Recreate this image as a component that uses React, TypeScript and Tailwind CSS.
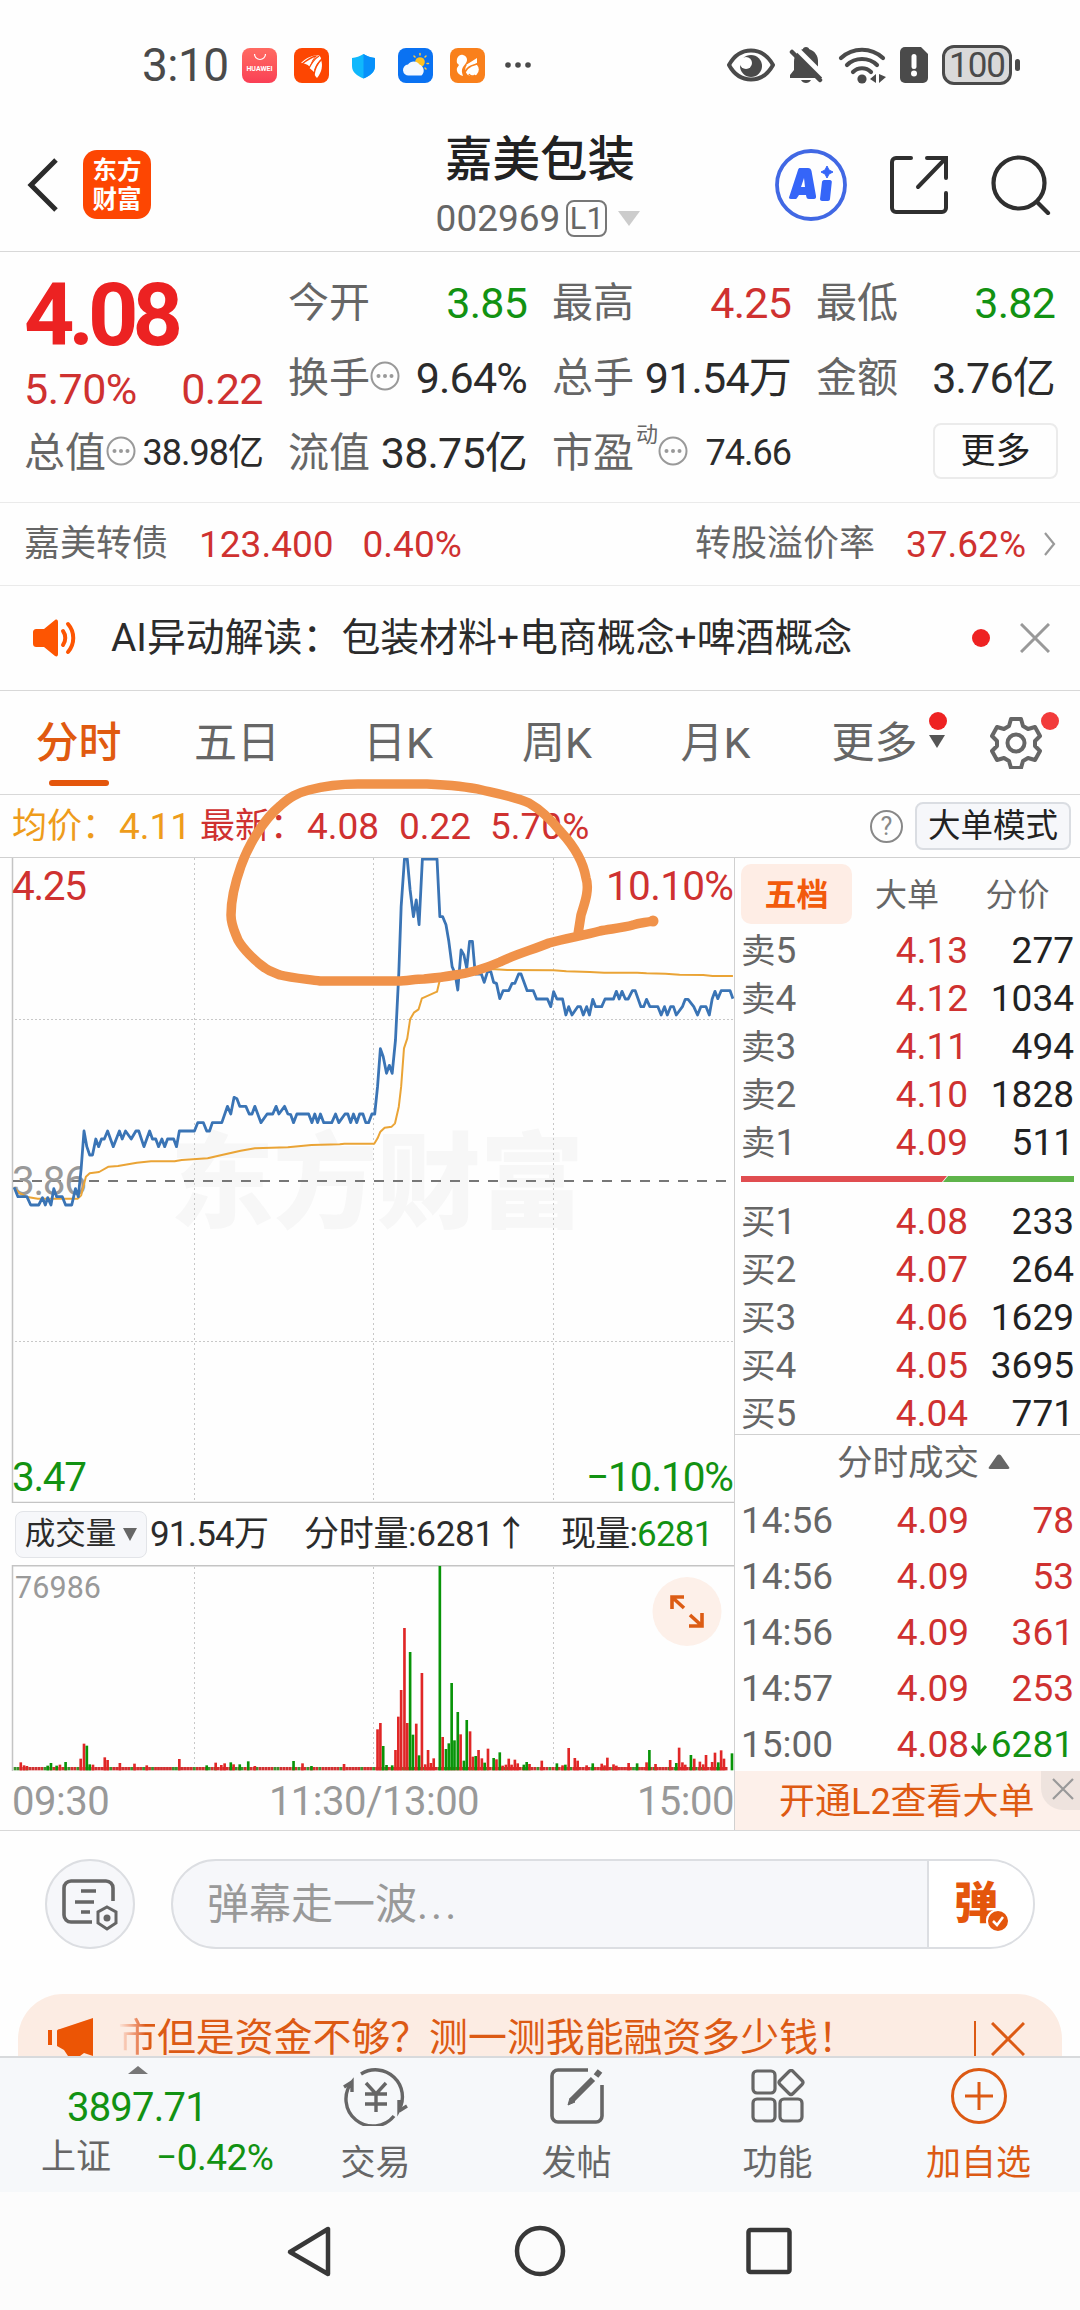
import React from 'react';

type Tone = 'up' | 'down' | 'flat';

const toneClass: Record<Tone, string> = {
  up: 'text-[#cf3130]',
  down: 'text-[#129212]',
  flat: 'text-[#2b2b2b]',
};

// Plot coordinates of the minute chart: 1568 x 1200 units
const PRICE_POINTS =
  '30,1042 38,1070 57,1070 65,1095 82,1095 90,1073 96,1095 101,1073 108,1095 114,1046 120,1070 132,1070 139,1095 152,1095 160,1046 166,1070 172,985 178,873 184,920 190,945 196,945 203,897 209,920 215,897 221,897 228,873 240,920 253,873 259,897 266,873 278,897 288,873 294,873 305,920 317,873 323,897 330,897 336,920 343,897 349,920 355,897 368,897 374,920 380,873 412,873 419,848 431,848 438,873 444,873 450,848 470,848 482,799 489,822 496,772 502,776 508,799 521,799 528,822 534,822 540,799 553,848 566,822 578,822 585,799 591,822 603,799 610,822 616,824 622,848 629,822 654,822 661,848 667,822 673,848 679,822 686,848 703,848 711,822 718,848 731,822 737,822 743,848 749,822 756,848 762,822 769,822 775,848 781,848 788,822 794,822 800,740 806,626 812,650 819,700 825,676 831,700 838,600 845,400 850,200 857,57 863,57 869,150 876,230 882,180 888,254 895,57 926,57 932,230 938,230 945,254 951,304 958,380 964,400 970,450 977,330 983,345 989,385 995,304 1001,304 1007,402 1020,402 1026,427 1033,395 1040,395 1046,427 1052,430 1059,476 1066,452 1078,452 1085,430 1091,430 1099,402 1104,402 1117,452 1130,452 1137,477 1160,477 1167,500 1173,455 1180,477 1192,477 1199,525 1205,500 1212,525 1224,500 1230,500 1236,525 1243,500 1249,525 1256,478 1262,500 1275,500 1282,477 1300,477 1306,454 1312,477 1318,454 1325,477 1331,477 1340,452 1346,452 1358,500 1364,500 1370,478 1377,500 1394,500 1401,525 1408,500 1414,525 1421,500 1427,500 1433,525 1446,500 1452,478 1458,478 1470,500 1478,525 1485,500 1496,500 1503,525 1509,477 1515,454 1521,476 1528,452 1547,452 1553,476';

const AVG_POINTS =
  '30,1042 40,1058 55,1070 80,1076 165,1076 172,1066 182,1010 190,1000 210,996 230,980 250,978 290,968 320,964 370,964 385,960 440,955 470,945 510,932 540,925 610,922 660,915 720,913 730,911 793,911 800,895 806,875 815,863 830,860 837,850 845,800 850,740 856,625 863,595 869,538 877,518 887,508 894,475 926,455 931,425 970,402 1000,393 1040,387 1075,390 1173,391 1200,394 1250,396 1280,398 1350,398 1370,400 1410,401 1440,404 1490,405 1510,408 1553,408';

// x:top pairs of the volume bars that stand out, baseline at 810
const RED_BARS =
  '44:787 51:796 57:798 127:794 171:776 178:731 197:794 222:772 228:780 254:789 285:791 311:796 380:777 457:788 469:795 476:790 495:793 540:798 641:790 729:792 800:688 806:669 838:750 844:650 850:570 857:384 863:669 882:671 894:519 901:793 907:750 913:789 919:775 938:711 976:703 996:694 1002:770 1014:750 1021:775 1034:746 1052:778 1065:797 1072:794 1078:776 1084:794 1091:779 1097:790 1122:792 1148:782 1192:796 1205:744 1218:774 1224:782 1243:796 1275:791 1281:796 1287:773 1300:793 1306:797 1332:789 1370:787 1389:792 1420:780 1439:743 1446:787 1452:794 1471:776 1483:785 1490:793 1496:765 1509:786 1515:758 1528:751 1534:776';
const GREEN_BARS =
  '101:797 108:789 120:797 139:786 184:737 190:793 438:796 489:787 508:793 526:784 622:783 660:798 812:738 819:795 831:796 869:456 875:704 888:766 932:198 945:747 951:730 957:549 963:721 970:636 983:782 989:660 1008:768 1027:788 1046:774 1059:757 1110:794 1116:786 1180:790 1198:794 1256:790 1350:790 1376:750 1433:789 1464:765 1522:787 1551:760';

const parseBars = (src: string, color: string) =>
  src.split(' ').map((pair) => {
    const [x, top] = pair.split(':').map(Number);
    return { x, top, color };
  });

const bars = [...parseBars(RED_BARS, '#e02626'), ...parseBars(GREEN_BARS, '#089408')];

const baseBars = Array.from({ length: 239 }, (_, i) => ({
  x: 32 + i * 6.33,
  color: i < 2 || i % 7 === 4 || i % 11 === 10 ? '#3d8f2c' : '#d03030',
}));

const sells = [
  ['卖5', '4.13', '277'],
  ['卖4', '4.12', '1034'],
  ['卖3', '4.11', '494'],
  ['卖2', '4.10', '1828'],
  ['卖1', '4.09', '511'],
];

const buys = [
  ['买1', '4.08', '233'],
  ['买2', '4.07', '264'],
  ['买3', '4.06', '1629'],
  ['买4', '4.05', '3695'],
  ['买5', '4.04', '771'],
];

const deals = [
  { time: '14:56', price: '4.09', volume: '78' },
  { time: '14:56', price: '4.09', volume: '53' },
  { time: '14:56', price: '4.09', volume: '361' },
  { time: '14:57', price: '4.09', volume: '253' },
  { time: '15:00', price: '4.08', volume: '6281', down: true },
];

const StatusBar = () => (
  <div className="flex h-[130px] items-center pl-[142px] pr-[60px]">
    <span className="w-[100px] text-[46px] leading-none tracking-[-0.5px] text-[#4a4a4a]">3:10</span>
    <div className="flex items-center gap-[17px]">
      <div className="flex h-[35px] w-[35px] flex-col items-center overflow-hidden rounded-[8px] bg-linear-to-b from-[#ff6a62] to-[#fa3f55]">
        <svg width="14" height="17" viewBox="0 0 14 17" fill="none" stroke="#fff" strokeWidth="1.2" className="shrink-0">
          <path d="M1.500 6a5.500 5.500 0 0 0 11 0" />
        </svg>
        <span className="text-[7px] font-bold leading-[8px] text-white">HUAWEI</span>
      </div>
      <svg width="35" height="35" viewBox="0 0 35 35">
        <rect width="35" height="35" rx="8" fill="#fd4602" />
        <g fill="#fff">
          <path d="M7 15C12 10 17 8 23 7C19 10 17 14 16 19C13 16 10 15 7 15Z" />
          <path d="M24 7C26 8 27 9 27 11C23 15 20 20 20 24C18 22 17 21 15 20C18 15 20 10 24 7Z" />
          <path d="M27 12C29 17 28 24 23 30C21 28 20 26 20 24C22 19 24 15 27 12Z" />
        </g>
        <path d="M8 16C13 12 18 9 22 8M14 22C17 16 20 11 25 8M20 27C21 20 24 15 27 12" stroke="#fd4602" strokeWidth="1.300" fill="none" />
      </svg>
      <svg width="35" height="35" viewBox="0 0 35 35">
        <path d="M17.500 6C21 8.500 25 9.500 29 10v8c0 6-5 10-11.500 12.500C11 28 6 24 6 18v-8c4-.5 8-1.500 11.500-4Z" fill="#10b8fc" />
        <path d="M17.500 6C21 8.500 25 9.500 29 10v8c0 6-5 10-11.500 12.500Z" fill="#0790fa" />
      </svg>
      <svg width="35" height="35" viewBox="0 0 35 35">
        <rect width="35" height="35" rx="8" fill="#0a72f2" />
        <g stroke="#ffc93c" strokeWidth="1.500" strokeLinecap="round">
          <path d="M22 5.500v1.500M28 8l-1 1M30.500 15.500H29M28 21l-1-1M16 8l1 1" />
        </g>
        <circle cx="22" cy="14" r="4.800" fill="#ffc020" />
        <path d="M11 27.500a5.500 5.500 0 0 1-1-11 7 7 0 0 1 11.500 0 6.500 6.500 0 0 1 2 11Z" fill="#f3f8ff" />
      </svg>
      <svg width="35" height="35" viewBox="0 0 35 35">
        <rect width="35" height="35" rx="8" fill="#f9801c" />
        <path d="M7 15C6 10 9 6 13 7c4 1 5 5 3 8l-3 4c-2 3-1 6 0 9-4-1-7-4-6-8l2-3Z" fill="#fff" />
        <path d="m16 17 11-7v5l-7 4" fill="#fff" />
        <circle cx="22" cy="21.500" r="6.800" fill="#fff" />
        <path d="M14 29c0-7 4-11 13-13M19 26c1 2 4 3 6 1" stroke="#f9801c" strokeWidth="1.600" fill="none" />
      </svg>
      <svg width="30" height="8" viewBox="0 0 30 8" fill="#4a4a4a" className="ml-[2px]">
        <circle cx="4" cy="4" r="2.800" />
        <circle cx="14" cy="4" r="2.800" />
        <circle cx="24" cy="4" r="2.800" />
      </svg>
    </div>
    <div className="ml-auto flex items-center gap-[14px]">
      <svg width="48" height="36" viewBox="0 0 48 36">
        <path d="M2 18C8 7 15 3.500 24 3.500S40 7 46 18C40 29 33 32.500 24 32.500S8 29 2 18Z" fill="none" stroke="#4a4a4a" strokeWidth="4" strokeLinejoin="round" />
        <circle cx="24" cy="19" r="11" fill="#4a4a4a" />
        <circle cx="19" cy="16" r="6" fill="#fff" />
        <path d="M16 11c2 5 1 7-2 9l-3-8Z" fill="#fefefe" />
      </svg>
      <svg width="35" height="38" viewBox="0 0 35 38">
        <path d="M17 1c2 0 3 1 3 2 6 2 9 7 9 12v8l4 7v2H1v-3l4-5v-8C5 9 9 5 14 3c0-1 1-2 3-2Z" fill="#4a4a4a" />
        <path d="M12 34h10c-1 2-3 3-5 3s-4-1-5-3Z" fill="#4a4a4a" />
        <path d="M6 1 36 31" stroke="#fefefe" strokeWidth="5" />
        <path d="M3 6 31 34" stroke="#4a4a4a" strokeWidth="4.500" strokeLinecap="round" />
      </svg>
      <svg width="48" height="38" viewBox="0 0 48 38" fill="none" stroke="#4a4a4a" strokeWidth="4.200" strokeLinecap="round">
        <path d="M3 12C15 1 33 1 45 12" />
        <path d="M9 19c8-8 22-8 30 0" />
        <path d="M15 26c5-5 13-5 18 0" />
        <circle cx="24" cy="33" r="4.600" fill="#4a4a4a" stroke="none" />
        <path d="M38 28v9l-6-4ZM41 28v9l7-6Z" fill="#4a4a4a" stroke="none" />
      </svg>
      <svg width="28" height="36" viewBox="0 0 28 36">
        <path d="M5 0h16l7 7v24a5 5 0 0 1-5 5H5a5 5 0 0 1-5-5V5a5 5 0 0 1 5-5Z" fill="#4a4a4a" />
        <path d="M14 9.500v10" stroke="#fff" strokeWidth="5" strokeLinecap="round" />
        <circle cx="14" cy="26.500" r="3" fill="#fff" />
      </svg>
      <div className="flex items-center gap-[3px]">
        <div className="flex h-[40px] w-[70px] items-center justify-center rounded-[12px] border-[3px] border-[#4a4a4a] bg-[#d9d9d9] text-[35px] leading-none tracking-[-1px] text-[#4a4a4a]">
          100
        </div>
        <div className="h-[12px] w-[5px] rounded-full bg-[#4a4a4a]" />
      </div>
    </div>
  </div>
);

const Header = () => (
  <div className="grid h-[122px] grid-cols-[1fr_auto_1fr] items-start border-b border-[#d8d8d8]">
    <div className="flex h-[109px] items-center gap-[25px] pl-[27px]">
      <svg width="31" height="54" viewBox="0 0 31 54" fill="none" stroke="#2b2b2b" strokeWidth="5">
        <path d="M29 2 4 27l25 25" />
      </svg>
      <div className="flex h-[69px] w-[68px] flex-col items-center justify-center rounded-[14px] bg-[#fd4602] text-[24.500px] font-bold leading-[29px] text-white">
        <span>东方</span>
        <span>财富</span>
      </div>
    </div>
    <div className="flex flex-col items-center">
      <div className="h-[60px] text-[47.500px] font-medium leading-[60px] text-[#222]">嘉美包装</div>
      <div className="-ml-[4px] flex h-[56px] items-center text-[#666]">
        <span className="text-[37px] leading-none">002969</span>
        <span className="ml-[6px] flex h-[37px] w-[41px] items-center justify-center rounded-[8px] border-2 border-[#777] text-[31px] leading-none">
          L1
        </span>
        <svg width="22" height="15" viewBox="0 0 22 15" className="ml-[11px]">
          <path d="M0 0h22L11 15Z" fill="#ccc" />
        </svg>
      </div>
    </div>
    <div className="flex h-[109px] items-center justify-end gap-[43px] pr-[29px]">
      <svg width="72" height="72" viewBox="0 0 72 72" fill="none">
        <circle cx="36" cy="36" r="34" stroke="#4168e4" strokeWidth="3.800" />
        <path
          d="M25 19h8c2 0 3 1 3.500 3L41 47c.3 2-.5 3-2 3h-5c-2 0-2.500-1-3-4h-7l-2 3c-.6 1-1 1-2 1h-4c-2 0-2.500-1-1.500-3L23 21c.5-1.500 1-2 2-2Zm4 10-3 9h4Z"
          fill="#3565f8"
          fillRule="evenodd"
        />
        <path d="M49 31h6c1 0 2 1 1.800 2L55 50c0 1-1 2-2 2h-6c-1 0-2-1-2-2l2-17c0-1 1-2 2-2Z" fill="#3565f8" />
        <path d="m52 17 2 4 4 2-4 2-2 4-2-4-4-2 4-2Z" fill="#3565f8" stroke="#3565f8" />
      </svg>
      <svg width="58" height="58" viewBox="0 0 58 58" fill="none" stroke="#2f2f2f" strokeWidth="4" strokeLinecap="round">
        <path d="M21 2H6a4 4 0 0 0-4 4v46a4 4 0 0 0 4 4h46a4 4 0 0 0 4-4V37" />
        <path d="M37 2h19v20M55 3 28 31" />
      </svg>
      <svg width="60" height="60" viewBox="0 0 60 60" fill="none" stroke="#2f2f2f" strokeWidth="4.200" strokeLinecap="round">
        <circle cx="28" cy="28" r="25.500" />
        <path d="m46 47 11 11" />
      </svg>
    </div>
  </div>
);

const MoreDots = () => (
  <svg width="30" height="30" viewBox="0 0 30 30" className="mt-[-4px] shrink-0">
    <circle cx="15" cy="15" r="13.500" fill="none" stroke="#999" strokeWidth="2" />
    <g fill="#999">
      <circle cx="8.500" cy="15" r="2" />
      <circle cx="15" cy="15" r="2" />
      <circle cx="21.500" cy="15" r="2" />
    </g>
  </svg>
);

interface StatProps {
  label: string;
  value: string;
  tone?: Tone;
  dots?: boolean;
  small?: boolean;
  sup?: string;
}

const Stat: React.FC<StatProps> = ({ label, value, tone = 'flat', dots, small, sup }) => (
  <div className="flex h-[75px] items-center justify-between whitespace-nowrap pt-px leading-none">
    <div className="-ml-[2px] flex items-center text-[41px] text-[#666]">
      <span>{label}</span>
      {sup && <span className="-mt-[36px] ml-[2px] text-[22px]">{sup}</span>}
      {dots && <MoreDots />}
    </div>
    <span className={`${toneClass[tone]} ${small ? 'text-[36px] tracking-[-1px]' : 'text-[43px] tracking-[-0.8px]'}`}>{value}</span>
  </div>
);

const QuotePanel = () => (
  <div className="grid h-[251px] grid-cols-4 gap-[27px] border-b border-[#eaeaea] pl-[26px] pr-[25px] pt-[13px]">
    <div>
      <div className="-ml-[2px] flex h-[98px] items-center pt-[2px] text-[88px] font-bold leading-none tracking-[-6px] text-[#ec2222]">
        4.08
      </div>
      <div className="-ml-[2px] flex h-[52px] items-center justify-between pt-px text-[43px] leading-none tracking-[-0.5px] text-[#cf3130]">
        <span>5.70%</span>
        <span>0.22</span>
      </div>
      <Stat label="总值" value="38.98亿" dots small />
    </div>
    <div>
      <Stat label="今开" value="3.85" tone="down" />
      <Stat label="换手" value="9.64%" dots />
      <Stat label="流值" value="38.75亿" />
    </div>
    <div>
      <Stat label="最高" value="4.25" tone="up" />
      <Stat label="总手" value="91.54万" />
      <Stat label="市盈" value="74.66" sup="动" dots small />
    </div>
    <div>
      <Stat label="最低" value="3.82" tone="down" />
      <Stat label="金额" value="3.76亿" />
      <div className="-mr-[3px] flex h-[75px] items-center justify-end">
        <div className="-mt-[3px] flex h-[56px] w-[125px] items-center justify-center rounded-[8px] border-2 border-[#ebebeb] text-[35px] leading-none text-[#222]">
          更多
        </div>
      </div>
    </div>
  </div>
);

const BondRow = () => (
  <div className="flex h-[83px] items-center border-b border-[#eaeaea] pl-[24px] pr-[24px] leading-none">
    <span className="text-[36px] text-[#666]">嘉美转债</span>
    <span className="ml-[31px] text-[37px] text-[#cf3130]">123.400</span>
    <span className="ml-[29px] text-[37px] text-[#cf3130]">0.40%</span>
    <span className="ml-auto text-[36px] text-[#666]">转股溢价率</span>
    <span className="ml-[31px] text-[37px] text-[#cf3130]">37.62%</span>
    <svg width="12" height="24" viewBox="0 0 12 24" fill="none" stroke="#999" strokeWidth="2.200" className="ml-[18px]">
      <path d="m1 1 9 11-9 11" />
    </svg>
  </div>
);

const NoticeRow = () => (
  <div className="flex h-[105px] items-center border-b border-[#d8d8d8] pl-[33px] pr-[30px]">
    <svg width="46" height="38" viewBox="0 0 46 38">
      <path d="M4 10h7L22 1c2-1 3 0 3 2v32c0 2-1 3-3 2l-11-9H4c-3 0-4-1-4-4V14c0-3 1-4 4-4Z" fill="#fd5502" />
      <path d="M30 12c3 4 3 10 0 14M35 5c7 8 7 20 0 28" stroke="#fd5502" strokeWidth="4" fill="none" strokeLinecap="round" />
    </svg>
    <span className="ml-[32px] text-[38.900px] leading-none text-[#2b2b2b]">AI异动解读：包装材料+电商概念+啤酒概念</span>
    <span className="ml-auto h-[18px] w-[18px] rounded-full bg-[#ee2222]" />
    <svg width="30" height="30" viewBox="0 0 30 30" stroke="#999" strokeWidth="3" className="ml-[30px]">
      <path d="m1 1 28 28M29 1 1 29" />
    </svg>
  </div>
);

const PeriodTabs = () => (
  <div className="flex h-[104px] items-center border-b border-[#d8d8d8] text-[43px] leading-none text-[#666]">
    <div className="relative flex h-full w-[157px] items-center justify-center pt-[2px] font-medium text-[#e05a10]">
      分时
      <div className="absolute bottom-[8px] left-[49px] h-[6px] w-[60px] rounded-full bg-[#e4560c]" />
    </div>
    <div className="w-[160px] pt-[2px] text-center">五日</div>
    <div className="w-[162px] pt-[2px] text-center">日K</div>
    <div className="w-[156px] pt-[2px] text-center">周K</div>
    <div className="w-[161px] pt-[2px] text-center">月K</div>
    <div className="relative w-[157px] pt-[2px] text-center">
      更多
      <svg width="16" height="13" viewBox="0 0 16 13" className="absolute left-[133px] top-[15px]">
        <path d="M0 0h16L8 13Z" fill="#555" />
      </svg>
      <span className="absolute left-[133px] top-[-8px] h-[18px] w-[18px] rounded-full bg-[#ee2222]" />
    </div>
    <div className="relative flex flex-1 justify-center pr-[2px]">
      <svg width="52" height="52" viewBox="0 0 52 52" fill="none" stroke="#666" strokeWidth="4">
        <path
          d="M21 2h10l2 7 5 3 7-2 5 9-5 5v5l5 5-5 9-7-2-5 3-2 7H21l-2-7-5-3-7 2-5-9 5-5v-5l-5-5 5-9 7 2 5-3Z"
          strokeLinejoin="round"
        />
        <circle cx="26" cy="26" r="8.500" />
      </svg>
      <span className="absolute left-[88px] top-[-5px] h-[18px] w-[18px] rounded-full bg-[#f23b3b]" />
    </div>
  </div>
);

const PriceInfo = () => (
  <div className="flex h-[63px] items-center whitespace-nowrap border-b border-[#d0d0d0] pl-[12px] pr-[9px] text-[35px] leading-none">
    <span className="w-[107px] text-[#ee9c1b]">均价：</span>
    <span className="w-[81px] text-[37px] text-[#ee9c1b]">4.11</span>
    <span className="w-[107px] text-[#cf3130]">最新：</span>
    <span className="w-[92px] text-[37px] text-[#cf3130]">4.08</span>
    <span className="w-[91px] text-[37px] text-[#cf3130]">0.22</span>
    <span className="text-[37px] text-[#cf3130]">5.70%</span>
    <div className="ml-auto flex h-[33px] w-[33px] items-center justify-center rounded-full border-2 border-[#888] text-[25px] text-[#888]">?</div>
    <div className="ml-[12px] flex h-[48px] w-[156px] items-center justify-center rounded-[8px] border-2 border-[#dadde2] bg-[#f6f7fa] text-[32.500px] text-[#222]">
      大单模式
    </div>
  </div>
);

const VerticalGrid = ({ y1, y2 }: { y1: number; y2: number }) => (
  <g stroke="#c8c8c8" strokeWidth="1" strokeDasharray="2 3">
    <path d={`M194.500 ${y1}V${y2}`} />
    <path d={`M373.500 ${y1}V${y2}`} />
    <path d={`M553.500 ${y1}V${y2}`} />
  </g>
);

const PriceChart = () => (
  <svg width="734" height="645" viewBox="0 858 734 645" className="block">
    <text x="170" y="1220" textLength="414" fontSize="104" fontWeight="900" fill="#f7f7f7">
      东方财富
    </text>
    <VerticalGrid y1={858} y2={1502} />
    <path d="M15 1019.500H733M15 1341.500H733" stroke="#c8c8c8" strokeDasharray="2 2" />
    <path d="M12.500 858V1502.500H734" fill="none" stroke="#c4c4c4" strokeWidth="1.500" />
    <path d="M13 1181H733" stroke="#777" strokeWidth="1.800" strokeDasharray="10 9" />
    <g fontSize="40.500">
      <text x="12" y="900" textLength="75" fill="#cf3130">4.25</text>
      <text x="606" y="900" textLength="128" fill="#cf3130">10.10%</text>
      <text x="12" y="1195" textLength="75" fill="#999">3.86</text>
      <text x="12" y="1491" textLength="75" fill="#129212">3.47</text>
      <text x="586" y="1491" textLength="148" fill="#129212">−10.10%</text>
    </g>
    <g transform="translate(0 840) scale(0.47194 0.33333)" fill="none" strokeLinejoin="round">
      <polyline points={AVG_POINTS} stroke="#eaa436" strokeWidth="2" vectorEffect="non-scaling-stroke" />
      <polyline points={PRICE_POINTS} stroke="#3a74b5" strokeWidth="2.800" vectorEffect="non-scaling-stroke" />
    </g>
  </svg>
);

const VolumeChart = () => (
  <svg width="734" height="206" viewBox="0 1565 734 206" className="block">
    <VerticalGrid y1={1567} y2={1770} />
    <path d="M12.500 1771V1565.800H734" fill="none" stroke="#c4c4c4" strokeWidth="1.500" />
    <text x="15" y="1598" textLength="86" fontSize="30.500" fill="#999">76986</text>
    <g transform="translate(0 1500) scale(0.47194 0.33333)">
      {baseBars.map((bar, i) => (
        <rect key={i} x={bar.x - 3} y={801} width={6} height={10} fill={bar.color} />
      ))}
      {bars.map((bar, i) => (
        <rect key={i} x={bar.x - 2.8} y={bar.top} width={5.6} height={811 - bar.top} fill={bar.color} />
      ))}
    </g>
    <circle cx="687" cy="1611.500" r="34.500" fill="#fdf0e9" />
    <g fill="none" stroke="#dc5c14" strokeWidth="3.600">
      <path d="M672 1609V1597H684M673 1598 684 1608" />
      <path d="M702 1613V1626H689M701 1625 690 1615" />
    </g>
  </svg>
);

const ChartColumn = () => (
  <div className="w-[735px] border-r border-[#d0d0d0]">
    <PriceChart />
    <div className="flex h-[62px] items-center whitespace-nowrap pl-[15px] text-[35px] leading-none text-[#2b2b2b]">
      <div className="flex h-[47px] w-[132px] items-center justify-center gap-[7px] rounded-[8px] border border-[#e2e4e8] bg-[#f6f7fa] text-[30.500px]">
        成交量
        <svg width="14" height="13" viewBox="0 0 14 13">
          <path d="M0 0h14L7 13Z" fill="#666" />
        </svg>
      </div>
      <span className="ml-[3px] w-[154px] tracking-[-0.8px]">91.54万</span>
      <span className="w-[257px] tracking-[-0.3px]">分时量:6281↑</span>
      <span className="tracking-[-0.8px]">
        现量:<span className="text-[#129212]">6281</span>
      </span>
    </div>
    <VolumeChart />
    <div className="flex h-[59px] items-center justify-between pl-[12px] pt-[2px] text-[40px] leading-none tracking-[-0.5px] text-[#999]">
      <span>09:30</span>
      <span className="ml-[2px]">11:30/13:00</span>
      <span>15:00</span>
    </div>
  </div>
);

const LevelRow = ({ row }: { row: string[] }) => (
  <div className="flex h-[48px] items-center pl-[6px] pr-[6px] pt-[2px] text-[37px] leading-none">
    <span className="w-[90px] text-[#666]">
      <span className="text-[34.500px]">{row[0][0]}</span>
      {row[0][1]}
    </span>
    <span className="w-[137px] text-right text-[#cf3130]">{row[1]}</span>
    <span className="flex-1 text-right text-[#222]">{row[2]}</span>
  </div>
);

const OrderColumn = () => (
  <div className="w-[345px]">
    <div className="flex h-[67px] items-start pl-[6px] pt-[6px] text-[32px] leading-none text-[#666]">
      <div className="flex h-[60px] w-[111px] items-center justify-center rounded-[10px] bg-[#feede5] pt-[2px] font-bold text-[#f25a0c]">五档</div>
      <div className="flex h-[60px] w-[110px] items-center justify-center pt-[2px]">大单</div>
      <div className="flex h-[60px] w-[111px] items-center justify-center pt-[2px]">分价</div>
    </div>
    {sells.map((row) => (
      <LevelRow key={row[0]} row={row} />
    ))}
    <div className="flex h-[31px] items-start pl-[6px] pt-[11px]">
      <svg width="333" height="6" viewBox="0 0 333 6">
        <path d="M0 0H206L201 6H0Z" fill="#e04d50" />
        <path d="M207 0H333V6H202Z" fill="#5fb44b" />
      </svg>
    </div>
    <div className="h-[238px]">
      {buys.map((row) => (
        <LevelRow key={row[0]} row={row} />
      ))}
    </div>
    <div className="flex h-[57px] items-center justify-center gap-[9px] border-t border-[#d0d0d0] pl-[32px] pt-[2px] text-[35.500px] leading-none text-[#666]">
      分时成交
      <svg width="22" height="16" viewBox="0 0 22 16" className="-mt-[4px]">
        <path d="M9 1.500c1-1.500 3-1.500 4 0L21 13c1 1 0 2-1 2H2c-1 0-2-1-1-2Z" fill="#666" />
      </svg>
    </div>
    {deals.map((deal, i) => (
      <div key={i} className="flex h-[56px] items-center pl-[6px] pr-[6px] pt-[2px] text-[37px] leading-none">
        <span className="w-[110px] text-[#666]">{deal.time}</span>
        <span className="w-[118px] text-right text-[#cf3130]">{deal.price}</span>
        {deal.down ? (
          <span className="flex flex-1 items-center justify-end text-[#129212]">
            <svg width="16" height="24" viewBox="0 0 16 24" fill="none" stroke="#129212" strokeWidth="3" className="mr-[4px]">
              <path d="M8 1v20M1 14l7 8 7-8" />
            </svg>
            {deal.volume}
          </span>
        ) : (
          <span className="flex-1 text-right text-[#cf3130]">{deal.volume}</span>
        )}
      </div>
    ))}
    <div className="relative flex h-[59px] items-center bg-[#fdf0ea] pl-[44px] pt-[2px] text-[36px] leading-none text-[#de5a12]">
      开通L2查看大单
      <div className="absolute right-0 top-0 flex h-[39px] w-[39px] items-center justify-center rounded-bl-[22px] bg-[#eee3de]">
        <svg width="22" height="22" viewBox="0 0 22 22" stroke="#999" strokeWidth="2.200" className="ml-[5px] -mt-[4px]">
          <path d="m1 1 20 20M21 1 1 21" />
        </svg>
      </div>
    </div>
  </div>
);

const CommentBar = () => (
  <div className="flex items-center pl-[45px] pr-[45px] pt-[28px]">
    <div className="flex h-[90px] w-[90px] items-center justify-center rounded-full border-2 border-[#dcdee2] bg-[#f6f7fa]">
      <svg width="56" height="52" viewBox="0 0 56 52" fill="none" stroke="#666" strokeWidth="3.600" className="mt-[2px]">
        <path d="M51 22V9a7 7 0 0 0-7-7H9a7 7 0 0 0-7 7v27a7 7 0 0 0 7 7h21" />
        <path d="M19 12h15M13 23h19M19 33h9" />
        <path d="m45 28 9 5v11l-9 6-9-6V33Z" strokeWidth="3" />
        <circle cx="45" cy="39" r="3.500" fill="#666" stroke="none" />
      </svg>
    </div>
    <div className="ml-[36px] flex h-[90px] flex-1 items-center overflow-hidden rounded-full border-2 border-[#dcdee2] bg-[#f6f7fa]">
      <span className="flex-1 pl-[34px] pt-[2px] text-[42px] leading-none text-[#999]">
        弹幕走一波<span className="tracking-[3px]">...</span>
      </span>
      <div className="relative flex h-full w-[106px] items-center border-l-2 border-[#dcdee2] bg-white pl-[25px] text-[44px] font-black leading-none text-[#e4560c]">
        弹
        <svg width="24" height="24" viewBox="0 0 24 24" className="absolute left-[57px] top-[48px]">
          <circle cx="12" cy="12" r="11" fill="#e4560c" stroke="#fff" strokeWidth="2" />
          <path d="m7 12 4 4 6-8" stroke="#fff" strokeWidth="2.500" fill="none" />
        </svg>
      </div>
    </div>
  </div>
);

const PromoBanner = () => (
  <div className="mx-[18px] mt-[45px] flex h-[62px] items-start rounded-t-[45px] bg-[#fcece3] pl-[30px] pr-[37px] pt-[23px] leading-none text-[#dc5a14]">
    <svg width="46" height="38" viewBox="0 0 46 38" fill="#ec5505" className="mt-[1px]">
      <path d="M0 12h4v15H0ZM9 13c0-1 1-2 3-2L45 0v38l-9-3-4 3H20l-4-6-7-4Z" />
    </svg>
    <span className="ml-[24px] mt-[2px] whitespace-nowrap text-[38.900px] leading-[37px]">
      <span className="bg-linear-to-r from-[#fcece3] to-[#dc5a14] to-70% bg-clip-text text-transparent">市</span>
      但是资金不够？测一测我能融资多少钱！
    </span>
    <div className="ml-auto mt-[4px] h-[35px] w-[2px] bg-[#dc5a14]" />
    <svg width="34" height="34" viewBox="0 0 34 34" stroke="#dc5a14" strokeWidth="3" className="ml-[15px] mt-[5px]">
      <path d="m1 1 32 32M33 1 1 33" />
    </svg>
  </div>
);

const NavItem = ({ label, active, children }: { label: string; active?: boolean; children: React.ReactNode }) => (
  <div className={`flex w-[201px] flex-col items-center pt-[7px] text-[35px] leading-none ${active ? 'text-[#dc5a14]' : 'text-[#666]'}`}>
    <div className="flex h-[62px] items-center">{children}</div>
    <span className="mt-[19px]">{label}</span>
  </div>
);

const BottomNav = () => (
  <div className="relative flex h-[136px] border-t-2 border-[#d8dadc] bg-[#f6f8fa]">
    <div className="flex w-[275px] flex-col pt-[8px] leading-none">
      <svg width="20" height="8" viewBox="0 0 20 8" className="ml-[128px]">
        <path d="M10 0 20 8H0Z" fill="#777" />
      </svg>
      <span className="ml-[67px] mt-[14px] text-[40px] tracking-[-0.8px] text-[#129212]">3897.71</span>
      <div className="mt-[11px] flex items-center">
        <span className="ml-[41px] w-[115px] text-[35px] text-[#666]">上证</span>
        <span className="whitespace-nowrap text-[37px] tracking-[-0.5px] text-[#129212]">−0.42%</span>
      </div>
    </div>
    <NavItem label="交易">
      <svg width="66" height="60" viewBox="0 0 66 60" fill="none" stroke="#666" strokeWidth="3.400">
        <path d="M18 8A27 27 0 0 1 56 44V34" />
        <path d="M51 50A27 27 0 0 1 9 16v10" />
        <path d="m56 45 8-5M9 16l-8 5" />
        <path d="m23 17 10 11 10-11M22 28h22M22 38h22M33 28v18" />
      </svg>
    </NavItem>
    <NavItem label="发帖">
      <svg width="54" height="58" viewBox="0 0 54 58" fill="none" stroke="#666" strokeWidth="3.600">
        <path d="M38 3H8a6 6 0 0 0-6 6v40a6 6 0 0 0 6 6h38a6 6 0 0 0 6-6V18" />
        <path d="m46 9 4-5" strokeWidth="6" />
        <path d="M43 12 22 33" strokeWidth="6" />
        <path d="m18 38 2-7 5 4Z" fill="#666" strokeWidth="1" />
      </svg>
    </NavItem>
    <NavItem label="功能">
      <svg width="54" height="54" viewBox="0 0 54 54" fill="none" stroke="#666" strokeWidth="3.200">
        <rect x="2" y="2" width="22" height="22" rx="4" />
        <rect x="2" y="30" width="22" height="22" rx="4" />
        <rect x="29" y="30" width="22" height="22" rx="4" />
        <path d="m38 2.500c1.500-1.500 3-1.500 4 0l9 9c1.500 1.500 1.500 2.500 0 4l-9 9c-1.500 1.500-2.500 1.500-4 0l-9-9c-1.500-1.500-1.500-2.500 0-4Z" />
      </svg>
    </NavItem>
    <NavItem label="加自选" active>
      <svg width="58" height="58" viewBox="0 0 58 58" fill="none" stroke="#dc5a14" strokeWidth="3">
        <circle cx="29" cy="29" r="26.500" />
        <path d="M29 15v28M15 29h28" />
      </svg>
    </NavItem>
  </div>
);

const SystemNav = () => (
  <div className="h-[118px] bg-[#fcfcfc]">
    <svg width="1080" height="118" viewBox="0 2192 1080 118" fill="none" stroke="#383838" strokeWidth="4.500" strokeLinejoin="round">
      <path d="M328 2229V2274L290 2252Z" />
      <circle cx="540" cy="2251" r="23" />
      <rect x="748.500" y="2230" width="41" height="42" rx="2" />
    </svg>
  </div>
);

// Hand-drawn marker stroke over the chart
const MarkerStroke = () => (
  <svg width="460" height="230" viewBox="210 760 460 230" className="absolute left-[210px] top-[760px]" fill="none">
    <path
      d="M653 921C645 923 640 922 633 925C622 928 610 929 600 931C582 936 566 938 549 943C532 950 516 954 500 962C484 969 470 973 455 975C444 977 435 978 424 979C415 979 407 981 398 981H320C306 979 292 978 280 975C270 971 269 971 265 968C255 961 243 949 238 940C234 930 231 925 231 915C231 897 236 880 241 866C248 846 263 820 280 806C290 797 297 793 309 790C328 785 340 784 358 784H427C450 785 465 786 482 790C500 794 516 797 529 803C543 811 553 822 561 832C573 845 583 860 586 878C590 890 584 905 581 915L578 934"
      stroke="#f0924a"
      strokeWidth="9.500"
      strokeLinecap="round"
      strokeLinejoin="round"
    />
    <circle cx="653" cy="921" r="5.500" fill="#f0924a" />
  </svg>
);

const App: React.FC = () => {
  return (
    <div className="relative h-[2310px] w-[1080px] overflow-hidden bg-[#fefefe] font-[Roboto,'Noto_Sans_CJK_SC',sans-serif]">
      <StatusBar />
      <Header />
      <QuotePanel />
      <BondRow />
      <NoticeRow />
      <PeriodTabs />
      <PriceInfo />
      <div className="flex h-[973px] border-b border-[#d8d8d8]">
        <ChartColumn />
        <OrderColumn />
      </div>
      <CommentBar />
      <PromoBanner />
      <BottomNav />
      <SystemNav />
      <MarkerStroke />
    </div>
  );
};

export default App;
